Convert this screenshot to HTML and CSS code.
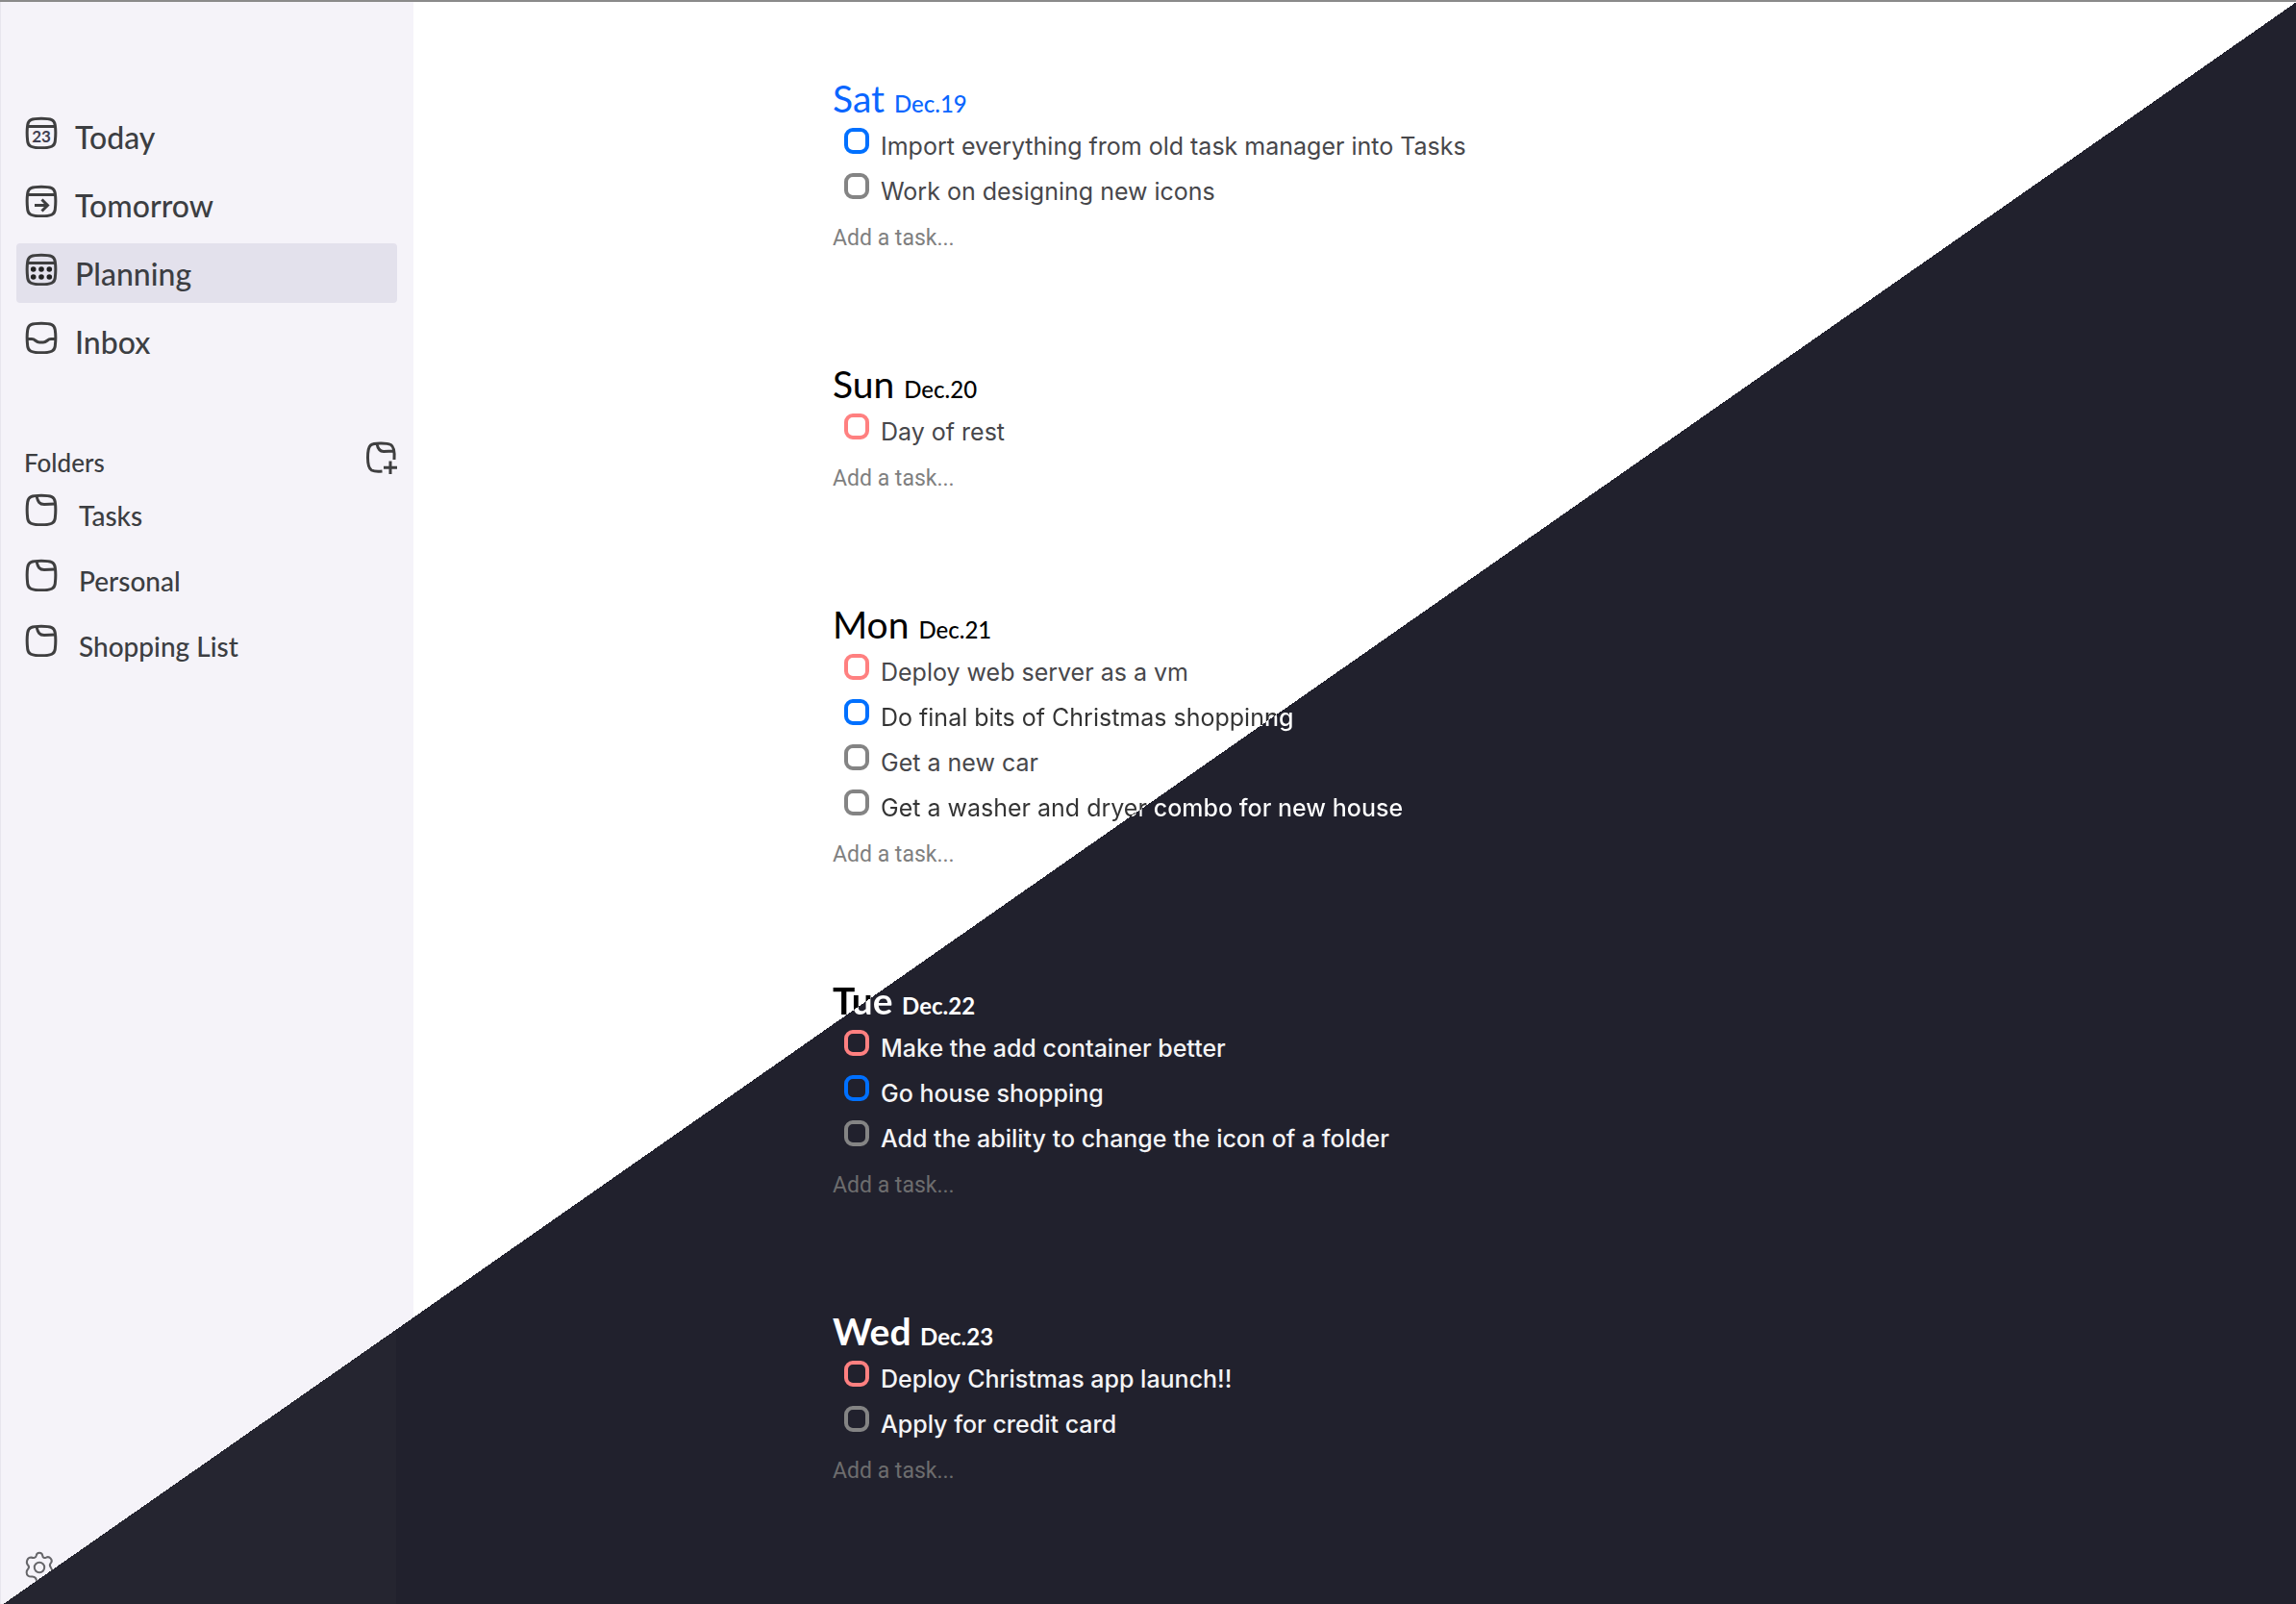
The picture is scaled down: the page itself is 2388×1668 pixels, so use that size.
FILE: index.html
```html
<!DOCTYPE html>
<html lang="en">
<head>
<meta charset="utf-8">
<meta name="viewport" content="width=device-width, initial-scale=1">
<title>Tasks</title>
<link rel="stylesheet" href="styles.css">
</head>
<body>
<svg class="sprite" aria-hidden="true">
  <symbol id="box" viewBox="0 0 34 34"><path d="M17 2.200C27.500 2.200 30.500 3.600 31.300 9C32 14 32 20 31.300 26C30.700 31 27.500 32.800 17 32.800S3.300 31 2.700 26C2 20 2 14 2.700 9C3.500 3.600 6.500 2.200 17 2.200Z"/></symbol>
  <symbol id="folder" viewBox="0 0 34 34"><use href="#box"/><path d="M12 3C13.500 9 15 11.500 20 11.500L31 11"/></symbol>
</svg>
<div class="app">
  <aside class="sidebar">
    <nav class="views" aria-label="Views">
      <a class="view" href="#today">
        <svg class="icon" viewBox="0 0 34 34"><use href="#box"/><path d="M3 10.500H31"/><text class="icon-day" x="17" y="27" text-anchor="middle">23</text></svg>
        <span>Today</span>
      </a>
      <a class="view" href="#tomorrow">
        <svg class="icon" viewBox="0 0 34 34"><use href="#box"/><path d="M3 10.500H31M10 21.500H23M17.500 15.500L23.500 21.500L17.500 27.500"/></svg>
        <span>Tomorrow</span>
      </a>
      <a class="view is-current" href="#planning" aria-current="page">
        <svg class="icon" viewBox="0 0 34 34"><use href="#box"/><path d="M3 10.500H31"/><g class="dots"><circle cx="8.700" cy="17" r="2.800"/><circle cx="17" cy="17" r="2.800"/><circle cx="25.300" cy="17" r="2.800"/><circle cx="8.700" cy="25" r="2.800"/><circle cx="17" cy="25" r="2.800"/><circle cx="25.300" cy="25" r="2.800"/></g></svg>
        <span>Planning</span>
      </a>
      <a class="view" href="#inbox">
        <svg class="icon" viewBox="0 0 34 34"><use href="#box"/><path d="M2.500 18.500H7C11 18.500 11 22 15 22H19C23 22 23 18.500 27 18.500H31.500"/></svg>
        <span>Inbox</span>
      </a>
    </nav>
    <div class="folders-head">
      <h2 class="folders-title">Folders</h2>
      <button class="icon-button" type="button" aria-label="Add folder">
        <svg class="icon" viewBox="0 0 34 34"><path d="M17.500 31C13 31.500 9 31.300 6.500 30C3 28 2.500 22 2.500 17C2.500 11 3 6 5.500 4C9 1.500 22 1.500 26.500 3.500C30 5.500 30.500 12 30 19M12 2.500C13 8 15 10.500 19 10.500L29.500 10M26 20.500V34M19 27.300H33"/></svg>
      </button>
    </div>
    <nav class="folders" aria-label="Folders">
      <a class="folder" href="#tasks"><svg class="icon"><use href="#folder"/></svg><span>Tasks</span></a>
      <a class="folder" href="#personal"><svg class="icon"><use href="#folder"/></svg><span>Personal</span></a>
      <a class="folder" href="#shopping"><svg class="icon"><use href="#folder"/></svg><span>Shopping List</span></a>
    </nav>
    <button class="icon-button settings" type="button" aria-label="Settings">
      <svg class="icon" viewBox="0 0 34 34">
        <clipPath id="edge"><path d="M0 0H34V15.500L8 34H0Z"/></clipPath>
        <g clip-path="url(#edge)"><circle cx="15" cy="17" r="5.200"/><path d="M11.800 4.500C12.300 0.900 17.700 0.900 18.200 4.500C18.500 7 20.300 7.600 22 6.700C25.500 4.600 29.300 9.400 27 12.100C25.300 13.800 25.700 15.500 26.800 17C28.800 19.700 29 24 26.700 25.700C25 27 23.500 26.300 22 26.600C19.500 27 18.700 28 18.200 29.700C17.300 33 12.700 33 11.800 29.700C11.300 28 10.500 27 8 26.600C6.500 26.300 5 27 3.300 25.700C1 24 1.200 20.500 3.200 18.500C4.300 17.300 4.300 15.800 3 14.500C0.700 12.100 2 6.500 6.500 6.500C9 7.600 11.300 7 11.800 4.500Z"/></g>
      </svg>
    </button>
  </aside>

  <main class="planner">
    <div class="days">
      <section class="day is-today">
        <h2 class="day-title">Sat <small>Dec.19</small></h2>
        <ul class="tasks">
          <li><label class="task"><input class="check blue" type="checkbox"><span>Import everything from old task manager into Tasks</span></label></li>
          <li><label class="task"><input class="check" type="checkbox"><span>Work on designing new icons</span></label></li>
        </ul>
        <input class="add" type="text" placeholder="Add a task..." aria-label="Add a task on Saturday">
      </section>
      <section class="day">
        <h2 class="day-title">Sun <small>Dec.20</small></h2>
        <ul class="tasks">
          <li><label class="task"><input class="check red" type="checkbox"><span>Day of rest</span></label></li>
        </ul>
        <input class="add" type="text" placeholder="Add a task..." aria-label="Add a task on Sunday">
      </section>
      <section class="day">
        <h2 class="day-title">Mon <small>Dec.21</small></h2>
        <ul class="tasks">
          <li><label class="task"><input class="check red" type="checkbox"><span>Deploy web server as a vm</span></label></li>
          <li><label class="task"><input class="check blue" type="checkbox"><span class="split">Do final bits of Christmas shoppin<b>ng</b></span></label></li>
          <li><label class="task"><input class="check" type="checkbox"><span>Get a new car</span></label></li>
          <li><label class="task"><input class="check" type="checkbox"><span class="split">Get a washer and dryer <b>combo for new house</b></span></label></li>
        </ul>
        <input class="add" type="text" placeholder="Add a task..." aria-label="Add a task on Monday">
      </section>
      <section class="day is-dark">
        <h2 class="day-title"><span class="split">Tue</span> <small>Dec.22</small></h2>
        <ul class="tasks">
          <li><label class="task"><input class="check red" type="checkbox"><span>Make the add container better</span></label></li>
          <li><label class="task"><input class="check blue" type="checkbox"><span>Go house shopping</span></label></li>
          <li><label class="task"><input class="check" type="checkbox"><span>Add the ability to change the icon of a folder</span></label></li>
        </ul>
        <input class="add" type="text" placeholder="Add a task..." aria-label="Add a task on Tuesday">
      </section>
      <section class="day is-dark">
        <h2 class="day-title">Wed <small>Dec.23</small></h2>
        <ul class="tasks">
          <li><label class="task"><input class="check red" type="checkbox"><span>Deploy Christmas app launch!!</span></label></li>
          <li><label class="task"><input class="check" type="checkbox"><span>Apply for credit card</span></label></li>
        </ul>
        <input class="add" type="text" placeholder="Add a task..." aria-label="Add a task on Wednesday">
      </section>
    </div>
  </main>
</div>
</body>
</html>
```
FILE: styles.css
```css
:root {
  --ink: #3c3e42;
  --dark: #21212d;
  --edge: calc(50% + 2px);
}

* { box-sizing: border-box; }

body {
  margin: 0;
  color: var(--ink);
  font-family: Lato, sans-serif;
  /* light theme above the diagonal, dark theme below it */
  background: linear-gradient(to bottom right, #fff var(--edge), var(--dark) var(--edge)) fixed;
}

h2, ul { margin: 0; padding: 0; font-weight: 400; }
ul { list-style: none; }
a { color: inherit; text-decoration: none; }

.sprite { position: absolute; width: 0; height: 0; }

.app {
  display: flex;
  min-height: 100vh;
  border-top: 2px solid #8a8a8a;
}

/* Sidebar */
.sidebar {
  display: flex;
  flex-direction: column;
  flex: none;
  width: 430px;
  padding: 109px 17px 21px 16px;
  border-left: 1px solid #e8e6ee;
  background:
    linear-gradient(to bottom right, #f5f3f9 var(--edge), transparent var(--edge)) fixed,
    linear-gradient(#252530, #252530) 0 0 / 411px 100% no-repeat;
}

.icon {
  flex: none;
  width: 34px;
  height: 34px;
  fill: none;
  stroke: #3f3f40;
  stroke-width: 3;
}

.icon-day {
  fill: #3f3f50;
  stroke: none;
  font: 700 17px Lato, sans-serif;
}

.dots { fill: #222; stroke: none; }

.views { display: grid; gap: 9px; }

.view, .folder {
  display: flex;
  align-items: flex-start;
}

.view {
  gap: 18px;
  width: 396px;
  height: 62px;
  padding: 10px 9px;
  border-radius: 4px;
  font-size: 32px;
  font-weight: 500;
  line-height: 44px;
}

.view.is-current { background: #e3e1ec; }

.folders-head {
  display: flex;
  justify-content: space-between;
  width: 397px;
  height: 54px;
  margin-top: 73px;
  padding-left: 8px;
}

.folders-title {
  font-size: 26px;
  font-weight: 500;
  line-height: 44px;
}

.icon-button {
  width: 34px;
  height: 34px;
  padding: 0;
  border: 0;
  background: none;
}

.folder {
  gap: 22px;
  height: 68px;
  padding-left: 9px;
  font-size: 28px;
  font-weight: 500;
  line-height: 46px;
}

.settings { margin: auto 0 0 9px; }
.settings .icon { stroke: #66666a; stroke-width: 2; }

/* Planner */
.planner {
  flex: 1;
  padding: 75px 40px 0;
}

.days {
  display: grid;
  gap: 105px;
  max-width: 1086px;
  margin: 0 auto;
}

.day { color: #000; }
.day.is-today { color: #0a66ff; }
.day.is-dark { color: #fff; }

.day-title {
  height: 50px;
  font-size: 39px;
  line-height: 50px;
}

.day-title small { font-size: 24px; font-weight: 500; }
.is-dark .day-title, .is-dark small { font-weight: 700; }

.task {
  display: flex;
  gap: 12px;
  height: 47px;
  padding: 6px 0 0 12px;
  color: #47474b;
  font: 400 25px/38px Inter, sans-serif;
}

.task b, .is-dark .task { font-weight: 500; }
.is-dark .task { color: #f4f4f6; }

.check {
  appearance: none;
  flex: none;
  width: 26px;
  height: 27px;
  margin: 0;
  border: 4px solid #848484;
  border-radius: 9px;
}

.check.blue { border-color: #0070ff; }
.check.red { border-color: #ff8080; }

.add {
  display: block;
  width: 100%;
  height: 48px;
  padding: 4px 0 0;
  border: 0;
  outline: 0;
  background: none;
  color: inherit;
  font: 23px Roboto, sans-serif;
}

.add::placeholder { color: #7f7f80; opacity: 1; }
.is-dark .add::placeholder { color: #6d6d6e; }

/* Lettering that changes theme where it crosses the diagonal */
.split {
  color: transparent;
  background: linear-gradient(to bottom right, #333 var(--edge), #fff var(--edge)) fixed;
  -webkit-background-clip: text;
  background-clip: text;
}

.day-title .split {
  background-image: linear-gradient(to bottom right, #000 var(--edge), #fff var(--edge));
}
```
